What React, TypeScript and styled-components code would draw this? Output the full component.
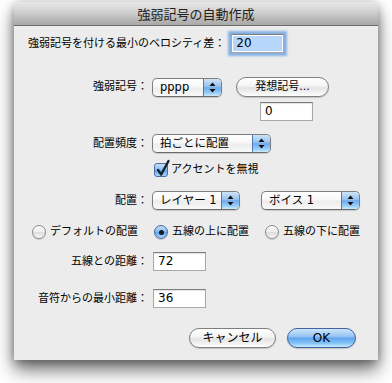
import React from "react";
import styled, { createGlobalStyle } from "styled-components";

const FONT = `"DejaVu Sans", "Noto Sans CJK JP", sans-serif`;

const Global = createGlobalStyle`
  html, body { margin: 0; padding: 0; background: #ffffff; }
  body { font-family: ${FONT}; color: #000; }
`;

const Stage = styled.div`
  width: 392px;
  height: 383px;
  padding: 2px 0 0 14px;
  box-sizing: border-box;
  overflow: hidden;
`;

const Window = styled.div`
  width: 364px;
  height: 358px;
  background: #ececec;
  border-radius: 6px 6px 0 0;
  box-shadow: 0 10px 18px rgba(0, 0, 0, 0.55), 0 2px 10px rgba(0, 0, 0, 0.3);
  display: flex;
  flex-direction: column;
  overflow: hidden;
`;

const TitleBar = styled.div`
  height: 23px;
  border-bottom: 1px solid #6c6c6c;
  background: linear-gradient(#e9e9e9 0%, #d2d2d2 40%, #b8b8b8 75%, #a9a9a9 100%);
  border-radius: 6px 6px 0 0;
  text-align: center;
  font-family: "Noto Sans CJK JP", sans-serif;
  font-size: 13px;
  line-height: 23px;
  color: #222;
  flex: none;
`;

const Content = styled.div`
  padding: 0 22px 0 14px;
  display: flex;
  flex-direction: column;
`;

const Row = styled.div<{ $top: number; $h: number; $indent?: number; $gap?: number; $end?: boolean }>`
  display: flex;
  align-items: center;
  margin-top: ${(p) => p.$top}px;
  height: ${(p) => p.$h}px;
  padding-left: ${(p) => p.$indent ?? 0}px;
  gap: ${(p) => p.$gap ?? 4}px;
  justify-content: ${(p) => (p.$end ? "flex-end" : "flex-start")};
  & > * { flex: none; }
`;

const Label = styled.span<{ $free?: boolean }>`
  width: ${(p) => (p.$free ? "auto" : "120px")};
  text-align: ${(p) => (p.$free ? "left" : "right")};
  font-size: 11px;
  line-height: 14px;
  white-space: nowrap;
  margin-right: ${(p) => (p.$free ? 2 : 0)}px;
`;

const Field = styled.div<{ $w?: number; $focus?: boolean }>`
  width: ${(p) => p.$w ?? 53}px;
  height: 19px;
  box-sizing: border-box;
  border: 1px solid #a8a8a8;
  border-top-color: #7d7d7d;
  background: ${(p) => (p.$focus ? "#b7d6fc" : "#ffffff")};
  box-shadow: ${(p) =>
    p.$focus
      ? "inset 0 0 0 1px #ffffff, 0 0 0 1px #86b0e0, 0 0 2px 3px rgba(104,160,228,0.75)"
      : "inset 0 1px 1px rgba(0,0,0,0.12)"};
  padding-left: 4px;
  font-size: 12px;
  line-height: 17px;
  font-family: "DejaVu Sans", sans-serif;
`;

const Popup = styled.div<{ $w: number }>`
  width: ${(p) => p.$w}px;
  height: 19px;
  box-sizing: border-box;
  border: 1px solid #7e7e7e;
  border-bottom-color: #6a6a6a;
  border-radius: 5px;
  background: linear-gradient(#ffffff 0%, #f7f7f7 48%, #ececec 52%, #f8f8f8 100%);
  box-shadow: 0 1px 1px rgba(0, 0, 0, 0.15);
  display: flex;
  align-items: stretch;
  overflow: hidden;
`;

const PopupText = styled.span`
  flex: 1;
  padding-left: 7px;
  font-size: 11.5px;
  line-height: 17px;
  white-space: nowrap;
`;

const PopupCap = styled.span`
  width: 17px;
  flex: none;
  border-left: 1px solid #4f79b5;
  background: linear-gradient(#cfe3f8 0%, #98c3f0 42%, #70abec 52%, #97cdf8 82%, #d0ebfd 100%);
  display: flex;
  align-items: center;
  justify-content: center;
`;

const Arrows = () => (
  <svg width="7" height="11" viewBox="0 0 7 11">
    <path d="M3.5 0.5 L6.5 4 L0.5 4 Z" fill="#111" />
    <path d="M3.5 10.5 L6.5 7 L0.5 7 Z" fill="#111" />
  </svg>
);

const PushButton = styled.div<{ $w: number; $default?: boolean; $size?: number }>`
  width: ${(p) => p.$w}px;
  height: 20px;
  box-sizing: border-box;
  border: 1px solid ${(p) => (p.$default ? "#40649f" : "#7f7f7f")};
  border-radius: 10px;
  background: ${(p) =>
    p.$default
      ? "linear-gradient(#cde4fb 0%, #99c6f3 40%, #62a5ee 52%, #86c4f7 80%, #c9edff 100%)"
      : "linear-gradient(#ffffff 0%, #f5f5f5 42%, #e4e4e4 55%, #f3f3f3 82%, #ffffff 100%)"};
  box-shadow: 0 1px 1px rgba(0, 0, 0, 0.18);
  text-align: center;
  font-size: ${(p) => p.$size ?? 12}px;
  line-height: 18px;
  white-space: nowrap;
`;

const CheckWrap = styled.label`
  display: flex;
  align-items: center;
  gap: 3px;
  font-size: 11px;
  line-height: 14px;
`;

const CheckBox = styled.span`
  position: relative;
  width: 14px;
  height: 14px;
  box-sizing: border-box;
  border: 1px solid #4c6ea6;
  border-radius: 3px;
  background: linear-gradient(#c8e0f8 0%, #8fbdef 45%, #6aa8ec 55%, #a6d5fa 100%);
  flex: none;
`;

const CheckMark = styled.svg`
  position: absolute;
  left: 0px;
  top: -5px;
`;

const RadioItem = styled.label`
  display: flex;
  align-items: center;
  gap: 4px;
  font-size: 11px;
  line-height: 14px;
  white-space: nowrap;
`;

const RadioDot = styled.span<{ $on?: boolean }>`
  width: 14px;
  height: 14px;
  box-sizing: border-box;
  border-radius: 50%;
  border: 1px solid ${(p) => (p.$on ? "#46679f" : "#8a8a8a")};
  background: ${(p) =>
    p.$on
      ? "linear-gradient(#c6dff8 0%, #8bbbef 45%, #66a6ec 55%, #a9d7fb 100%)"
      : "linear-gradient(#fdfdfd 0%, #ececec 50%, #dcdcdc 55%, #f9f9f9 100%)"};
  box-shadow: 0 1px 1px rgba(0, 0, 0, 0.15);
  display: flex;
  align-items: center;
  justify-content: center;
  flex: none;
  &::after {
    content: "";
    display: ${(p) => (p.$on ? "block" : "none")};
    width: 5px;
    height: 5px;
    border-radius: 50%;
    background: #141a24;
  }
`;

export default function App() {
  return (
    <>
      <Global />
      <Stage>
        <Window>
          <TitleBar>強弱記号の自動作成</TitleBar>
          <Content>
            <Row $top={7} $h={21} $gap={4}>
              <Label $free>強弱記号を付ける最小のベロシティ差：</Label>
              <Field $focus>20</Field>
            </Row>
            <Row $top={23} $h={20}>
              <Label>強弱記号：</Label>
              <Popup $w={70}>
                <PopupText>pppp</PopupText>
                <PopupCap><Arrows /></PopupCap>
              </Popup>
              <PushButton $w={93} $size={11} style={{ marginLeft: 10 }}>発想記号...</PushButton>
            </Row>
            <Row $top={5} $h={19} $indent={232}>
              <Field>0</Field>
            </Row>
            <Row $top={13} $h={19}>
              <Label>配置頻度：</Label>
              <Popup $w={119}>
                <PopupText>拍ごとに配置</PopupText>
                <PopupCap><Arrows /></PopupCap>
              </Popup>
            </Row>
            <Row $top={9} $h={15} $indent={126}>
              <CheckWrap>
                <CheckBox>
                  <CheckMark width="16" height="19" viewBox="0 0 16 19">
                    <path d="M3 11 L6.2 15.5 L13.5 2" fill="none" stroke="#16212f" strokeWidth="2.4" strokeLinecap="round" strokeLinejoin="round" />
                  </CheckMark>
                </CheckBox>
                アクセントを無視
              </CheckWrap>
            </Row>
            <Row $top={14} $h={19}>
              <Label>配置：</Label>
              <Popup $w={88}>
                <PopupText>レイヤー 1</PopupText>
                <PopupCap><Arrows /></PopupCap>
              </Popup>
              <Popup $w={99} style={{ marginLeft: 17 }}>
                <PopupText>ボイス 1</PopupText>
                <PopupCap><Arrows /></PopupCap>
              </Popup>
            </Row>
            <Row $top={14} $h={16} $indent={4} $gap={16}>
              <RadioItem><RadioDot />デフォルトの配置</RadioItem>
              <RadioItem><RadioDot $on />五線の上に配置</RadioItem>
              <RadioItem><RadioDot />五線の下に配置</RadioItem>
            </Row>
            <Row $top={12} $h={19} $gap={5}>
              <Label>五線との距離：</Label>
              <Field>72</Field>
            </Row>
            <Row $top={18} $h={19} $gap={5}>
              <Label>音符からの最小距離：</Label>
              <Field>36</Field>
            </Row>
            <Row $top={20} $h={20} $gap={11} $end>
              <PushButton $w={87}>キャンセル</PushButton>
              <PushButton $w={69} $default>OK</PushButton>
            </Row>
          </Content>
        </Window>
      </Stage>
    </>
  );
}
